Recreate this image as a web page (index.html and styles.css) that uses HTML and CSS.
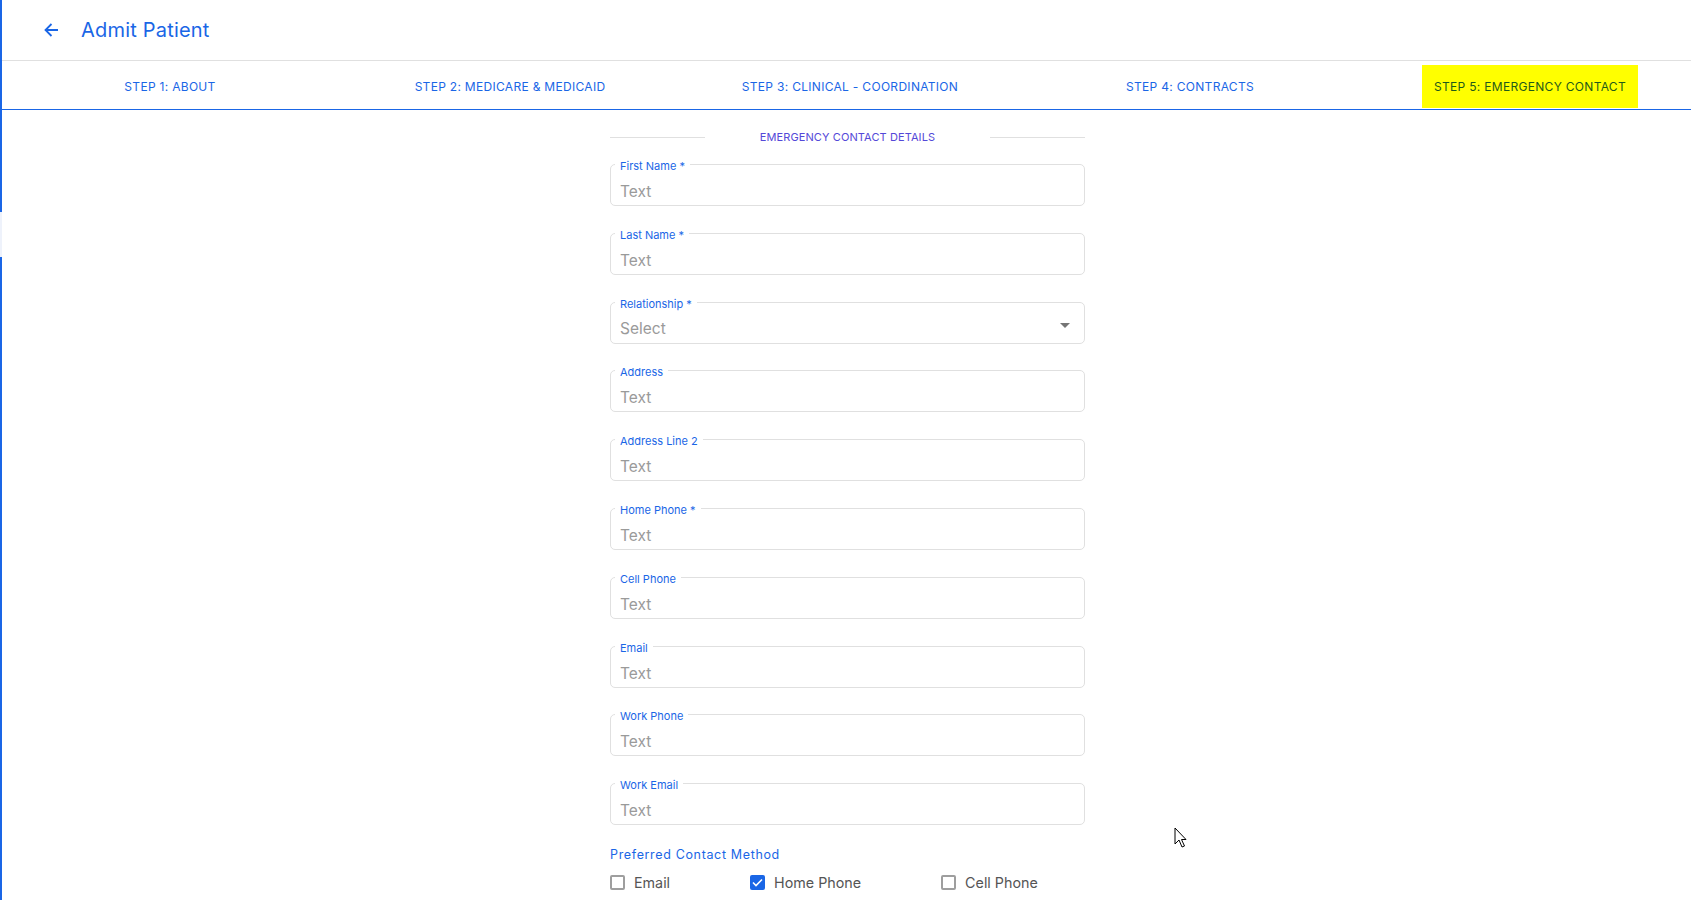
FILE: index.html
```html
<!DOCTYPE html>
<html lang="en">
<head>
  <meta charset="UTF-8" />
  <meta name="viewport" content="width=device-width, initial-scale=1.0"/>
  <title>Admit Patient</title>
  <link rel="stylesheet" href="styles.css">
</head>
<body>
  <div class="page">
    <header class="top-bar">
      <button class="back-btn" aria-label="Back">
        <svg width="16" height="16" viewBox="0 0 16 16"><path d="M15 8H2.5M8.5 2L2.5 8l6 6" fill="none" stroke="currentColor" stroke-width="1.8"/></svg>
      </button>
      <h1>Admit Patient</h1>
    </header>

    <nav class="steps">
      <div class="step"><span>Step 1: About</span></div>
      <div class="step"><span>Step 2: Medicare &amp; Medicaid</span></div>
      <div class="step"><span>Step 3: Clinical - Coordination</span></div>
      <div class="step"><span>Step 4: Contracts</span></div>
      <div class="step active"><span>Step 5: Emergency Contact</span></div>
    </nav>

    <form class="contact-form">
      <div class="section-title">
        <span class="rule"></span>
        <span class="title-text">Emergency Contact Details</span>
        <span class="rule"></span>
      </div>

      <div class="field"><label>First Name *</label><input type="text" placeholder="Text" /></div>
      <div class="field"><label>Last Name *</label><input type="text" placeholder="Text" /></div>
      <div class="field select-field">
        <label>Relationship *</label>
        <span class="select-value">Select</span>
        <svg class="caret" width="10" height="5" viewBox="0 0 10 5"><path d="M0 0h10L5 5z" fill="#757575"/></svg>
      </div>
      <div class="field"><label>Address</label><input type="text" placeholder="Text" /></div>
      <div class="field"><label>Address Line 2</label><input type="text" placeholder="Text" /></div>
      <div class="field"><label>Home Phone *</label><input type="text" placeholder="Text" /></div>
      <div class="field"><label>Cell Phone</label><input type="text" placeholder="Text" /></div>
      <div class="field"><label>Email</label><input type="text" placeholder="Text" /></div>
      <div class="field"><label>Work Phone</label><input type="text" placeholder="Text" /></div>
      <div class="field"><label>Work Email</label><input type="text" placeholder="Text" /></div>

      <div class="pref-title">Preferred Contact Method</div>
      <div class="pref-options">
        <label class="check"><span class="box"></span>Email</label>
        <label class="check"><span class="box checked"><svg width="11" height="9" viewBox="0 0 11 9"><path d="M1 4.5l3 3L10 1.5" fill="none" stroke="#fff" stroke-width="1.6"/></svg></span>Home Phone</label>
        <label class="check"><span class="box"></span>Cell Phone</label>
      </div>
    </form>

    <svg class="cursor" width="13" height="21" viewBox="0 0 13 21"><path d="M1 1v16l4-4 3 7 2.5-1-3-6.5H12z" fill="#fff" stroke="#000" stroke-width="1"/></svg>
  </div>
</body>
</html>
```

FILE: styles.css
```css
:root {
  --blue: #1a66e6;
  --indigo: #5448d8;
  --line: #e0e0e0;
  --muted: #9a9a9a;
  --text: #555;
  --font-family: Inter, "Noto Sans", Roboto, sans-serif;
}

* {
  margin: 0;
  padding: 0;
  box-sizing: border-box;
}

body {
  font-family: var(--font-family);
  background: #fff;
  overflow: hidden;
}

.page {
  position: relative;
  min-height: 100vh;
  padding-left: 2px;
  background: linear-gradient(to bottom, var(--blue) 0 212px, #eef2fb 212px 257px, var(--blue) 257px) left top / 2px 100% no-repeat;
}

.top-bar {
  height: 61px;
  display: flex;
  align-items: center;
  padding-left: 41px;
  border-bottom: 1px solid var(--line);
}

.back-btn {
  background: none;
  border: none;
  color: var(--blue);
  display: flex;
  cursor: pointer;
}

.top-bar h1 {
  margin-left: 22px;
  font-size: 20px;
  font-weight: 400;
  color: var(--blue);
  letter-spacing: 0.2px;
}

.steps {
  display: flex;
  overflow: hidden;
  margin-left: -2px;
  padding-top: 4px;
  padding-bottom: 1px;
  border-bottom: 1px solid var(--blue);
}

.step {
  flex: 0 0 340px;
  display: flex;
  justify-content: center;
}

.step span {
  height: 43px;
  padding: 0 12px;
  display: flex;
  align-items: center;
  font-size: 12px;
  text-transform: uppercase;
  letter-spacing: 0.3px;
  color: var(--blue);
}

.step.active span {
  background: #ffff00;
  color: #1f5a1a;
}

.contact-form {
  width: 475px;
  margin: 0 auto;
  padding-top: 20px;
  display: flex;
  flex-direction: column;
  position: relative;
  left: 1px;
}

.section-title {
  display: flex;
  align-items: center;
  height: 14px;
  margin-bottom: 20px;
}

.section-title .rule {
  flex: 0 0 95px;
  height: 1px;
  background: var(--line);
}

.title-text {
  flex: 1;
  text-align: center;
  font-size: 11px;
  text-transform: uppercase;
  color: var(--indigo);
  letter-spacing: 0.1px;
}

.field {
  position: relative;
  height: 42px;
  margin-bottom: 26.8px;
  padding: 16px 9px 0;
  border: 1px solid var(--line);
  border-radius: 5px;
}

.field label {
  position: absolute;
  top: -5px;
  left: 4px;
  padding: 0 5px;
  background: #fff;
  font-size: 11px;
  line-height: 13px;
  color: var(--blue);
}

.field input {
  width: 100%;
  height: 20px;
  border: none;
  outline: none;
  font-family: var(--font-family);
  font-size: 15.5px;
  color: #333;
}

.field input::placeholder,
.select-value {
  color: var(--muted);
}

.select-value {
  display: block;
  line-height: 20px;
  font-size: 15.5px;
}

.caret {
  position: absolute;
  right: 14px;
  top: 20px;
}

.pref-title {
  margin-top: -5px;
  font-size: 12.5px;
  line-height: 16px;
  letter-spacing: 0.65px;
  color: var(--blue);
}

.pref-options {
  display: flex;
  gap: 80px;
  margin-top: 10px;
}

.check {
  display: flex;
  align-items: center;
  gap: 9px;
  font-size: 14.3px;
  line-height: 20px;
  color: var(--text);
}

.box {
  width: 15px;
  height: 15px;
  border: 2px solid #9e9e9e;
  border-radius: 2px;
  display: flex;
  align-items: center;
  justify-content: center;
}

.box.checked {
  background: var(--blue);
  border-color: var(--blue);
}

.cursor {
  position: absolute;
  left: 1174px;
  top: 827px;
}
```
